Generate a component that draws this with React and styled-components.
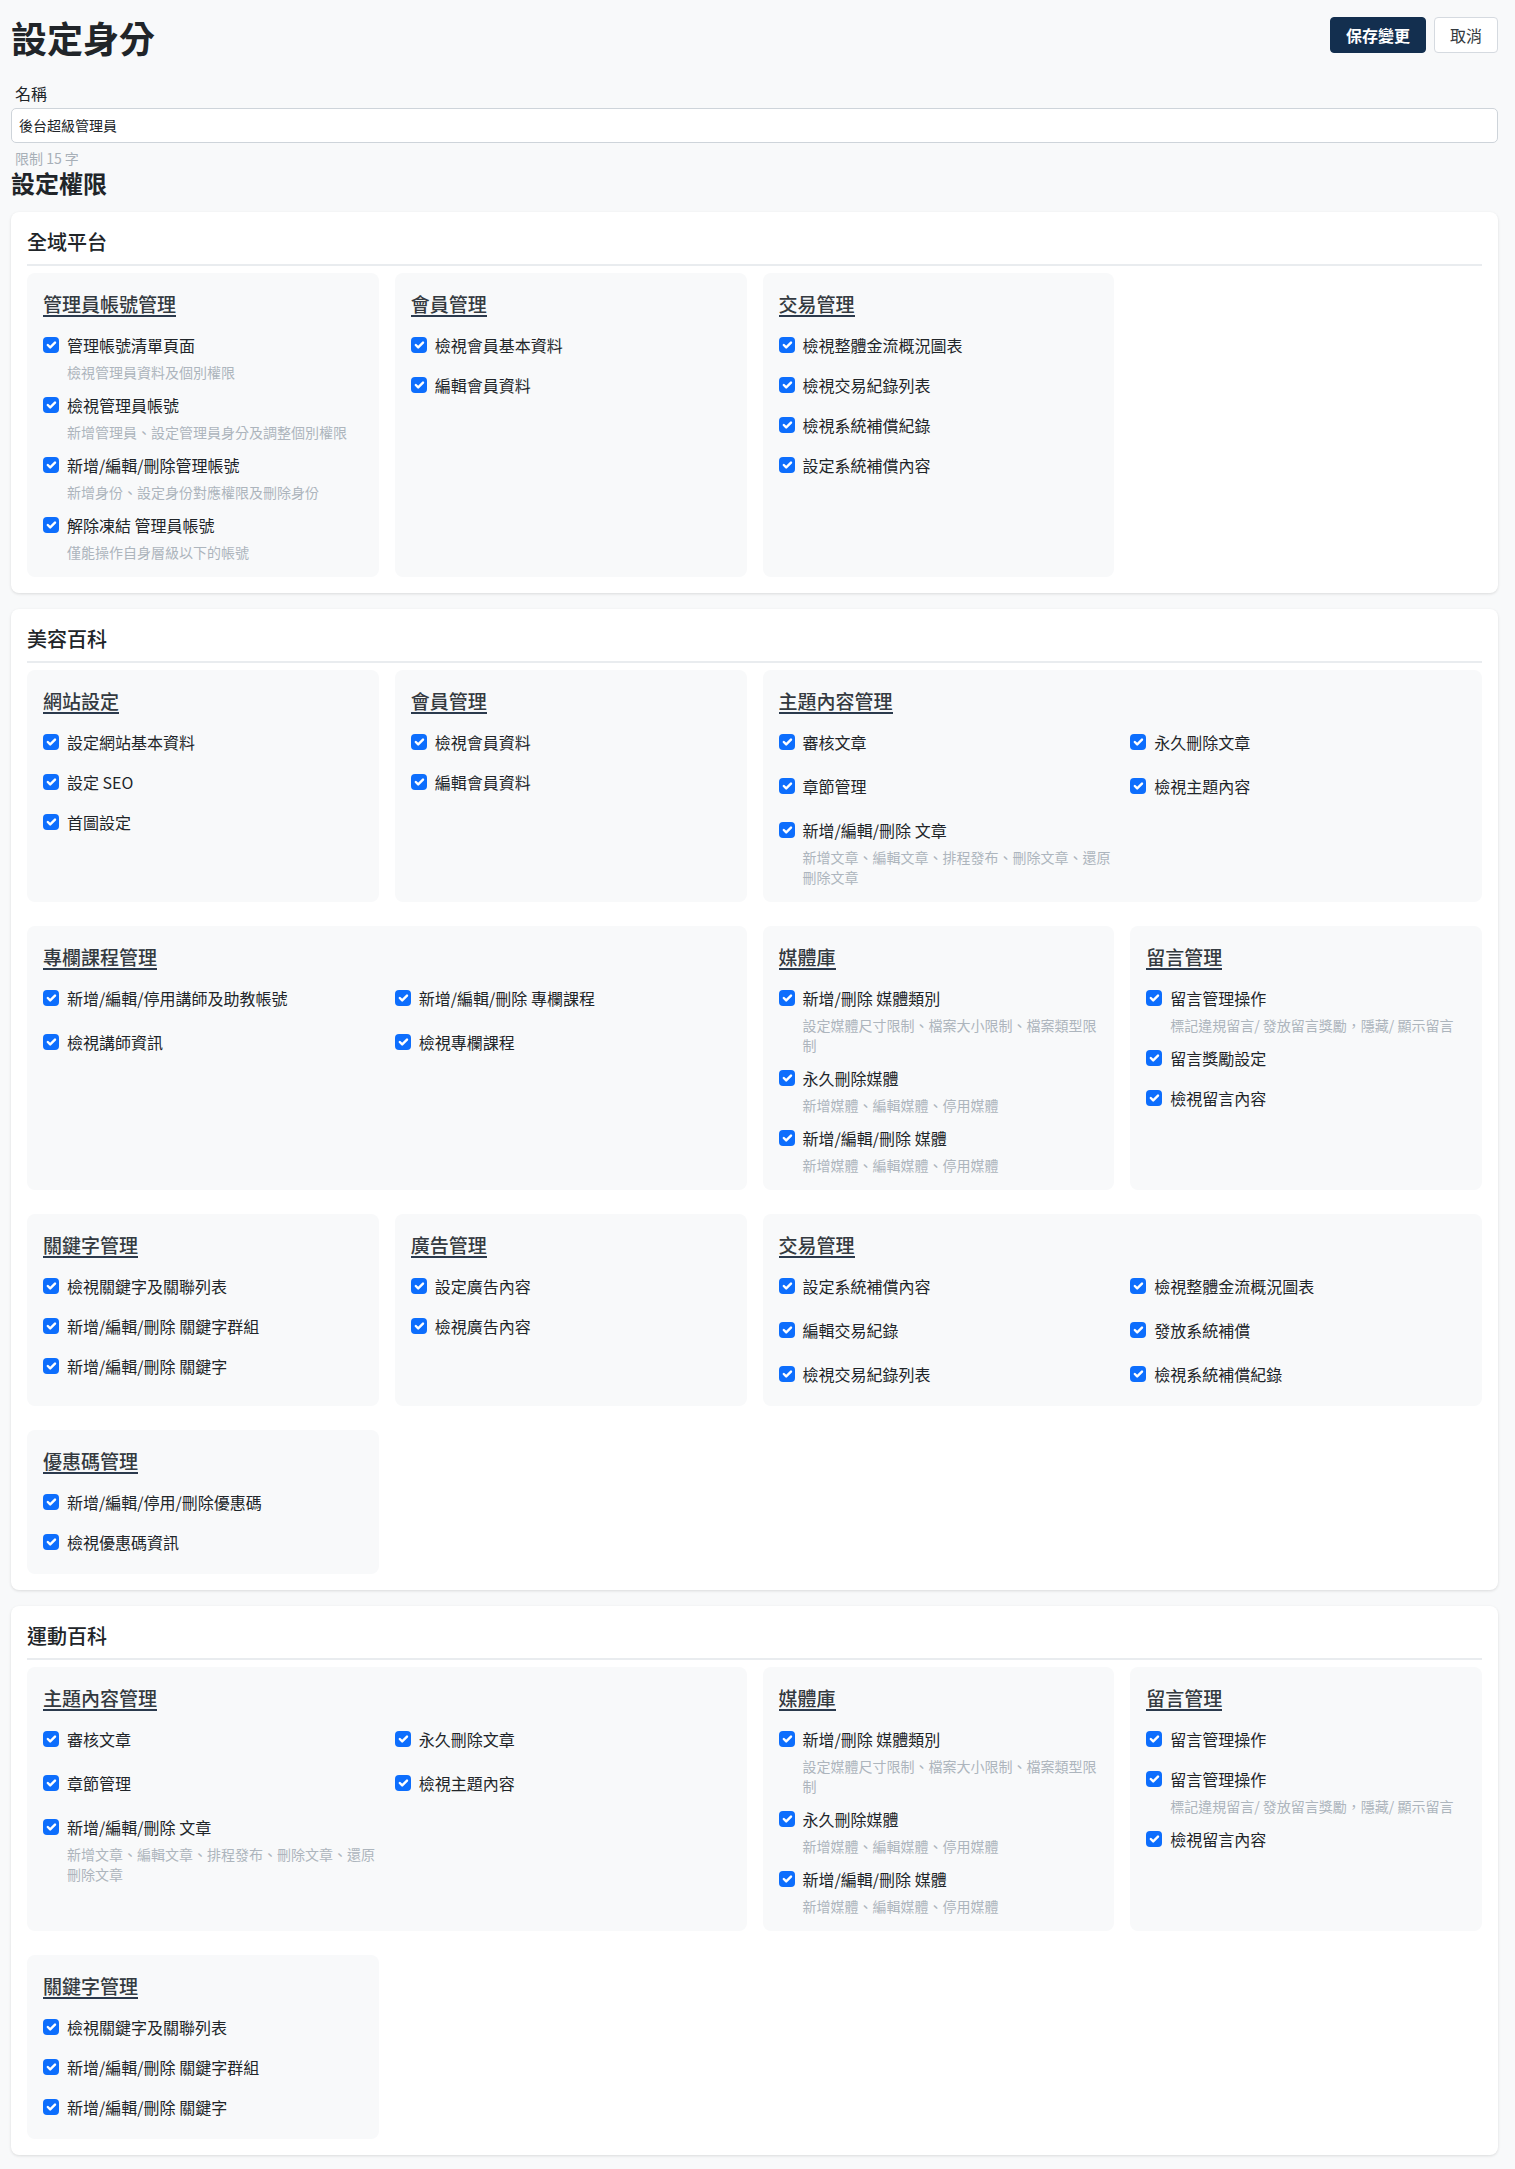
import React from 'react';
import styled, { createGlobalStyle } from 'styled-components';

const GlobalStyle = createGlobalStyle`
  html, body {
    margin: 0;
    padding: 0;
    background: #f8f9fa;
  }
  body {
    font-family: "Noto Sans CJK TC", "Noto Sans", sans-serif;
    color: #212529;
    -webkit-font-smoothing: antialiased;
  }
  * { box-sizing: border-box; }
`;

const Page = styled.div`
  padding: 16px 17px 16px 11px;
`;

const Header = styled.div`
  display: flex;
  justify-content: space-between;
  align-items: flex-start;
  margin-bottom: 22px;
`;

const PageTitle = styled.h1`
  margin: 0;
  font-size: 36px;
  line-height: 1.2;
  font-weight: 700;
  color: #212529;
`;

const Actions = styled.div`
  display: flex;
  gap: 8px;
  padding-top: 1px;
`;

const Button = styled.button`
  font-family: inherit;
  font-size: 16px;
  line-height: 24px;
  padding: 5px 15px;
  border-radius: 4px;
  border: 1px solid ${(p) => (p.primary ? '#132f4f' : '#d5dae0')};
  background: ${(p) => (p.primary ? '#132f4f' : '#fff')};
  color: ${(p) => (p.primary ? '#fff' : '#343a40')};
  font-weight: ${(p) => (p.primary ? 700 : 400)};
  cursor: pointer;
`;

const FieldLabel = styled.label`
  display: block;
  padding-left: 4px;
  font-size: 16px;
  line-height: 24px;
  margin-bottom: 3px;
`;

const TextInput = styled.input`
  display: block;
  width: 100%;
  font-family: inherit;
  font-size: 14px;
  line-height: 21px;
  padding: 6px 7px;
  border: 1px solid #ced4da;
  border-radius: 5px;
  background: #fff;
  color: #212529;
  outline: none;
`;

const Hint = styled.div`
  padding-left: 4px;
  margin-top: 5px;
  font-size: 14px;
  line-height: 21px;
  color: #a8b0b8;
`;

const SubTitle = styled.h2`
  margin: 0 0 14px;
  font-size: 24px;
  line-height: 1.2;
  font-weight: 700;
`;

const Stack = styled.div`
  display: flex;
  flex-direction: column;
  gap: 16px;
`;

const Card = styled.section`
  background: #fff;
  border-radius: 8px;
  padding: 16px;
  box-shadow: 0 1px 3px rgba(0, 0, 0, 0.12);
`;

const CardTitle = styled.h3`
  margin: 0;
  font-size: 20px;
  line-height: 24px;
  font-weight: 500;
  padding: 2px 0 10px;
  border-bottom: 2px solid #e9ecef;
`;

const GroupGrid = styled.div`
  display: grid;
  grid-template-columns: repeat(4, 1fr);
  gap: 24px 16px;
  margin-top: 7px;
`;

const Group = styled.div`
  grid-column: span ${(p) => p.span || 1};
  background: #f8f9fa;
  border-radius: 8px;
  padding: 20px 16px 4px;
  display: flex;
  flex-direction: column;
  align-items: flex-start;
`;

const GroupTitle = styled.h4`
  margin: 0 0 16px;
  font-size: 19px;
  line-height: 22px;
  font-weight: 500;
  color: #343a40;
  border-bottom: 2px solid #2b3a4d;
`;

const ItemList = styled.div`
  align-self: stretch;
  display: grid;
  grid-template-columns: repeat(${(p) => p.cols || 1}, 1fr);
  column-gap: 16px;
  row-gap: ${(p) => (p.cols > 1 ? '4px' : '0')};
  align-items: start;
`;

const Item = styled.div`
  display: grid;
  grid-template-columns: 16px 1fr;
  column-gap: 8px;
  margin-bottom: 16px;
`;

const CheckBox = styled.span`
  width: 16px;
  height: 16px;
  margin-top: 4px;
  border-radius: 4px;
  background: #0d6efd;
  display: flex;
  align-items: center;
  justify-content: center;
`;

const ItemLabel = styled.span`
  font-size: 16px;
  line-height: 24px;
  color: #212529;
`;

const Desc = styled.div`
  grid-column: 2;
  font-size: 14px;
  line-height: 20px;
  color: #adb5bd;
  margin: 5px 0 -5px;
`;

const Check = () => (
  <CheckBox>
    <svg width="16" height="16" viewBox="0 0 20 20">
      <path
        d="m6 10 3 3 6-6"
        fill="none"
        stroke="#fff"
        strokeWidth="3"
        strokeLinecap="round"
        strokeLinejoin="round"
      />
    </svg>
  </CheckBox>
);

const topicItems = [
  ['審核文章'],
  ['永久刪除文章'],
  ['章節管理'],
  ['檢視主題內容'],
  ['新增/編輯/刪除 文章', '新增文章、編輯文章、排程發布、刪除文章、還原刪除文章'],
];

const mediaItems = [
  ['新增/刪除 媒體類別', '設定媒體尺寸限制、檔案大小限制、檔案類型限制'],
  ['永久刪除媒體', '新增媒體、編輯媒體、停用媒體'],
  ['新增/編輯/刪除 媒體', '新增媒體、編輯媒體、停用媒體'],
];

const keywordItems = [
  ['檢視關鍵字及關聯列表'],
  ['新增/編輯/刪除 關鍵字群組'],
  ['新增/編輯/刪除 關鍵字'],
];

const commentNote = '標記違規留言/ 發放留言獎勵，隱藏/ 顯示留言';

const sections = [
  {
    title: '全域平台',
    groups: [
      {
        title: '管理員帳號管理',
        items: [
          ['管理帳號清單頁面', '檢視管理員資料及個別權限'],
          ['檢視管理員帳號', '新增管理員、設定管理員身分及調整個別權限'],
          ['新增/編輯/刪除管理帳號', '新增身份、設定身份對應權限及刪除身份'],
          ['解除凍結 管理員帳號', '僅能操作自身層級以下的帳號'],
        ],
      },
      { title: '會員管理', items: [['檢視會員基本資料'], ['編輯會員資料']] },
      {
        title: '交易管理',
        items: [['檢視整體金流概況圖表'], ['檢視交易紀錄列表'], ['檢視系統補償紀錄'], ['設定系統補償內容']],
      },
    ],
  },
  {
    title: '美容百科',
    groups: [
      { title: '網站設定', items: [['設定網站基本資料'], ['設定 SEO'], ['首圖設定']] },
      { title: '會員管理', items: [['檢視會員資料'], ['編輯會員資料']] },
      { title: '主題內容管理', span: 2, cols: 2, items: topicItems },
      {
        title: '專欄課程管理',
        span: 2,
        cols: 2,
        items: [['新增/編輯/停用講師及助教帳號'], ['新增/編輯/刪除 專欄課程'], ['檢視講師資訊'], ['檢視專欄課程']],
      },
      { title: '媒體庫', items: mediaItems },
      { title: '留言管理', items: [['留言管理操作', commentNote], ['留言獎勵設定'], ['檢視留言內容']] },
      { title: '關鍵字管理', items: keywordItems },
      { title: '廣告管理', items: [['設定廣告內容'], ['檢視廣告內容']] },
      {
        title: '交易管理',
        span: 2,
        cols: 2,
        items: [
          ['設定系統補償內容'],
          ['檢視整體金流概況圖表'],
          ['編輯交易紀錄'],
          ['發放系統補償'],
          ['檢視交易紀錄列表'],
          ['檢視系統補償紀錄'],
        ],
      },
      { title: '優惠碼管理', items: [['新增/編輯/停用/刪除優惠碼'], ['檢視優惠碼資訊']] },
    ],
  },
  {
    title: '運動百科',
    groups: [
      { title: '主題內容管理', span: 2, cols: 2, items: topicItems },
      { title: '媒體庫', items: mediaItems },
      { title: '留言管理', items: [['留言管理操作'], ['留言管理操作', commentNote], ['檢視留言內容']] },
      { title: '關鍵字管理', items: keywordItems },
    ],
  },
];

export default function App() {
  return (
    <Page>
      <GlobalStyle />
      <Header>
        <PageTitle>設定身分</PageTitle>
        <Actions>
          <Button primary>保存變更</Button>
          <Button>取消</Button>
        </Actions>
      </Header>

      <FieldLabel htmlFor="role-name">名稱</FieldLabel>
      <TextInput id="role-name" defaultValue="後台超級管理員" />
      <Hint>限制 15 字</Hint>

      <SubTitle>設定權限</SubTitle>

      <Stack>
        {sections.map((section) => (
          <Card key={section.title}>
            <CardTitle>{section.title}</CardTitle>
            <GroupGrid>
              {section.groups.map((group, gi) => (
                <Group key={gi} span={group.span}>
                  <GroupTitle>{group.title}</GroupTitle>
                  <ItemList cols={group.cols}>
                    {group.items.map(([label, desc], i) => (
                      <Item key={i}>
                        <Check />
                        <ItemLabel>{label}</ItemLabel>
                        {desc && <Desc>{desc}</Desc>}
                      </Item>
                    ))}
                  </ItemList>
                </Group>
              ))}
            </GroupGrid>
          </Card>
        ))}
      </Stack>
    </Page>
  );
}
